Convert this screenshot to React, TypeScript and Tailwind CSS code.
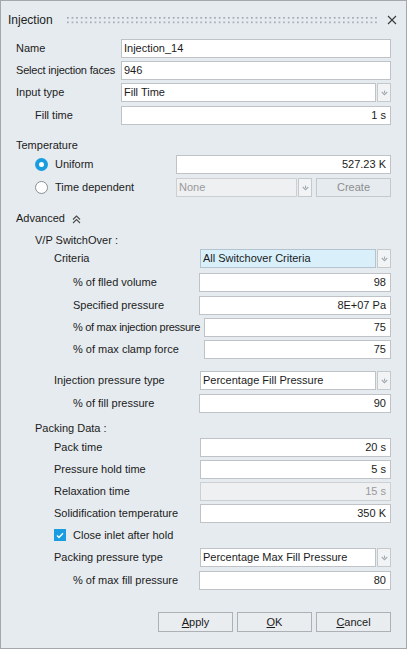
import React from 'react'

function DropArrow() {
  return (
    <svg width="7" height="6" viewBox="0 0 7 6">
      <path d="M0.8 2 L3.5 4.7 L6.2 2" fill="none" stroke="#a3abb1" strokeWidth="1.2" />
      <path d="M3.5 0.5 V3" stroke="#a3abb1" strokeWidth="1" />
    </svg>
  )
}

function Box({
  value,
  className,
  left = false,
  disabled = false,
}: {
  value: string
  className: string
  left?: boolean
  disabled?: boolean
}) {
  return (
    <div
      className={`h-[19px] shrink-0 border flex items-center pl-[2px] pr-[4px] ${
        disabled ? 'bg-[#eef0f2] border-[#cdd0d3] text-[#9a9a9a]' : 'bg-white border-[#bfc3c7]'
      } ${left ? 'justify-start' : 'justify-end'} ${className}`}
    >
      {value}
    </div>
  )
}

function Combo({
  value,
  mainW,
  blue = false,
  disabled = false,
}: {
  value: string
  mainW: string
  blue?: boolean
  disabled?: boolean
}) {
  return (
    <div className="flex h-[19px] shrink-0">
      <div
        className={`h-full border flex items-center pl-[2px] ${mainW} ${
          blue
            ? 'bg-[#d9f0fb] border-[#b3c3cf]'
            : disabled
            ? 'bg-[#eef0f2] border-[#cdd0d3] text-[#9a9a9a]'
            : 'bg-white border-[#bfc3c7]'
        }`}
      >
        {value}
      </div>
      <div className="ml-[1px] w-[14px] h-full border border-[#c6c9cc] bg-[#f1f3f5] flex items-center justify-center">
        <DropArrow />
      </div>
    </div>
  )
}

function Btn({ first, rest }: { first: string; rest: string }) {
  return (
    <div className="w-[75px] h-[20px] border border-[#adb1b5] bg-[#e9edf0] flex items-center justify-center">
      <span className="underline">{first}</span>
      {rest}
    </div>
  )
}

export default function App() {
  return (
    <div className="w-[407px] h-[649px] bg-[#e6ebef] border border-[#a4a8ac] flex flex-col text-[11px] leading-none text-[#1b1b1b] whitespace-nowrap font-['Liberation_Sans',Arial,sans-serif]">
      {/* Title bar */}
      <div className="h-[38px] shrink-0 flex items-center pl-[7px]">
        <span className="text-[12px] text-[#222]">Injection</span>
        <svg className="ml-[14px]" width="311" height="7">
          <defs>
            <pattern id="grip" width="4.6" height="4.5" patternUnits="userSpaceOnUse">
              <rect x="0" y="0" width="1.6" height="1.6" fill="#98a2ab" />
            </pattern>
          </defs>
          <rect width="311" height="7" fill="url(#grip)" />
        </svg>
        <svg className="ml-[9px]" width="10" height="10" viewBox="0 0 10 10">
          <path d="M1 1 L9 9 M9 1 L1 9" stroke="#3a3a3a" strokeWidth="1.1" />
        </svg>
      </div>

      {/* Basic */}
      <div className="flex items-center h-[19px]">
        <div className="w-[120px] shrink-0 pl-[15px]">Name</div>
        <Box value="Injection_14" left className="w-[270px]" />
      </div>
      <div className="flex items-center h-[19px] mt-[3px]">
        <div className="w-[120px] shrink-0 pl-[15px] tracking-[-0.2px]">Select injection faces</div>
        <Box value="946" left className="w-[270px]" />
      </div>
      <div className="flex items-center h-[19px] mt-[3px]">
        <div className="w-[120px] shrink-0 pl-[15px]">Input type</div>
        <Combo value="Fill Time" mainW="w-[255px]" />
      </div>
      <div className="flex items-center h-[19px] mt-[4px]">
        <div className="w-[120px] shrink-0 pl-[34px]">Fill time</div>
        <Box value="1 s" className="w-[270px]" />
      </div>

      {/* Temperature */}
      <div className="flex items-center h-[19px] mt-[11px] pl-[15px]">Temperature</div>
      <div className="flex items-center h-[19px]">
        <div className="w-[175px] shrink-0 pl-[34px] flex items-center">
          <div className="w-[13px] h-[13px] rounded-full bg-[#1a9de0] flex items-center justify-center">
            <div className="w-[5px] h-[5px] rounded-full bg-white" />
          </div>
          <span className="ml-[7px]">Uniform</span>
        </div>
        <Box value="527.23 K" className="w-[215px]" />
      </div>
      <div className="flex items-center h-[19px] mt-[4px]">
        <div className="w-[175px] shrink-0 pl-[34px] flex items-center">
          <div className="w-[13px] h-[13px] rounded-full bg-white border border-[#8a8e92]" />
          <span className="ml-[7px]">Time dependent</span>
        </div>
        <Combo value="None" mainW="w-[121px]" disabled />
        <div className="ml-[4px] w-[75px] h-[19px] border border-[#c6c9cc] text-[#8d8d8d] flex items-center justify-center">
          Create
        </div>
      </div>

      {/* Advanced */}
      <div className="flex items-center h-[19px] mt-[12px] pl-[15px]">
        <span>Advanced</span>
        <svg className="ml-[7px] mt-[2px]" width="9" height="9" viewBox="0 0 9 9">
          <path d="M1 4.5 L4.5 1 L8 4.5 M1 8 L4.5 4.5 L8 8" fill="none" stroke="#4a4a4a" strokeWidth="1.1" />
        </svg>
      </div>
      <div className="flex items-center h-[16px] mt-[4px] pl-[34px]">V/P SwitchOver :</div>
      <div className="flex items-center h-[19px] mt-[1px]">
        <div className="w-[199px] shrink-0 pl-[53px]">Criteria</div>
        <Combo value="All Switchover Criteria" mainW="w-[176px]" blue />
      </div>
      <div className="flex items-center h-[19px] mt-[5px]">
        <div className="w-[198px] shrink-0 pl-[72px]">% of flled volume</div>
        <Box value="98" className="w-[192px]" />
      </div>
      <div className="flex items-center h-[19px] mt-[4px]">
        <div className="w-[198px] shrink-0 pl-[72px]">Specified pressure</div>
        <Box value="8E+07 Pa" className="w-[192px]" />
      </div>
      <div className="flex items-center h-[19px] mt-[3px]">
        <div className="w-[203px] shrink-0 pl-[72px] tracking-[-0.3px]">% of max injection pressure</div>
        <Box value="75" className="w-[187px]" />
      </div>
      <div className="flex items-center h-[19px] mt-[3px]">
        <div className="w-[203px] shrink-0 pl-[72px]">% of max clamp force</div>
        <Box value="75" className="w-[187px]" />
      </div>

      <div className="flex items-center h-[19px] mt-[12px]">
        <div className="w-[199px] shrink-0 pl-[53px]">Injection pressure type</div>
        <Combo value="Percentage Fill Pressure" mainW="w-[176px]" />
      </div>
      <div className="flex items-center h-[19px] mt-[4px]">
        <div className="w-[198px] shrink-0 pl-[72px]">% of fill pressure</div>
        <Box value="90" className="w-[192px]" />
      </div>

      {/* Packing */}
      <div className="flex items-center h-[16px] mt-[7px] pl-[34px]">Packing Data :</div>
      <div className="flex items-center h-[19px] mt-[2px]">
        <div className="w-[199px] shrink-0 pl-[53px]">Pack time</div>
        <Box value="20 s" className="w-[191px]" />
      </div>
      <div className="flex items-center h-[19px] mt-[3px]">
        <div className="w-[199px] shrink-0 pl-[53px]">Pressure hold time</div>
        <Box value="5 s" className="w-[191px]" />
      </div>
      <div className="flex items-center h-[19px] mt-[3px]">
        <div className="w-[199px] shrink-0 pl-[53px]">Relaxation time</div>
        <Box value="15 s" disabled className="w-[191px]" />
      </div>
      <div className="flex items-center h-[19px] mt-[3px]">
        <div className="w-[199px] shrink-0 pl-[53px]">Solidification temperature</div>
        <Box value="350 K" className="w-[191px]" />
      </div>
      <div className="flex items-center h-[16px] mt-[4px] pl-[53px]">
        <div className="w-[12px] h-[12px] bg-[#1a9de0] flex items-center justify-center">
          <svg width="8" height="7" viewBox="0 0 8 7">
            <path d="M1 3.6 L3 5.5 L7 1.3" fill="none" stroke="white" strokeWidth="1.4" />
          </svg>
        </div>
        <span className="ml-[7px]">Close inlet after hold</span>
      </div>
      <div className="flex items-center h-[19px] mt-[5px]">
        <div className="w-[199px] shrink-0 pl-[53px]">Packing pressure type</div>
        <Combo value="Percentage Max Fill Pressure" mainW="w-[176px]" />
      </div>
      <div className="flex items-center h-[19px] mt-[4px]">
        <div className="w-[198px] shrink-0 pl-[72px]">% of max fill pressure</div>
        <Box value="80" className="w-[192px]" />
      </div>

      {/* Buttons */}
      <div className="flex items-center h-[20px] mt-[22px] pl-[157px] gap-[4px]">
        <Btn first="A" rest="pply" />
        <Btn first="O" rest="K" />
        <Btn first="C" rest="ancel" />
      </div>
    </div>
  )
}
